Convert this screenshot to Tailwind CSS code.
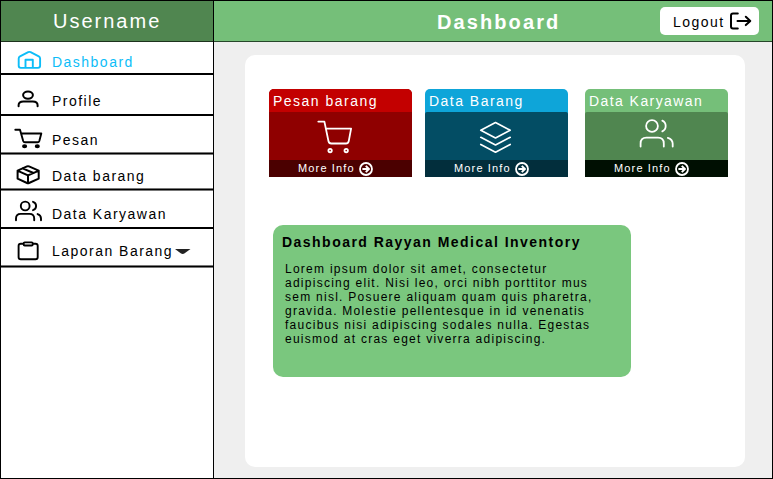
<!DOCTYPE html>
<html lang="id">
<head>
<meta charset="utf-8">
<title>Dashboard</title>
<script src="https://cdn.jsdelivr.net/npm/@tailwindcss/browser@4"></script>
</head>
<body class="w-[773px] h-[479px] overflow-hidden font-['Liberation_Sans',Arial,sans-serif] text-black">
<div class="flex w-[773px] h-[479px] border border-black bg-[#efefef]">
  <aside class="w-[213px] h-full shrink-0 bg-white border-r border-black">
    <div class="h-[41px] bg-[#508650] border-b border-[#1d321d] text-white text-[20px] leading-[24px] tracking-[0.1em] pt-[8px] pl-[52px]">Username</div>
    <nav class="text-[14px] leading-[16px] tracking-[1.48px] whitespace-nowrap">
      <a class="flex h-[33px] border-b-2 border-black text-[#0dbdf8]">
        <svg class="w-[51px] h-[31px] shrink-0" viewBox="1 42 51 31" fill="none" stroke="currentColor" stroke-width="1.9" stroke-linecap="round" stroke-linejoin="round"><path d="M18.7 58.6Q18.7 57 20 56.3L28.2 52.2Q29.4 51.6 30.6 52.2L38.8 56.3Q40.1 57 40.1 58.6V65.8Q40.1 67.9 38 67.9H20.8Q18.7 67.9 18.7 65.8ZM25.5 67.5V59.7H32.8V67.5"/></svg>
        <span class="pt-[12px]">Dashboard</span>
      </a>
      <a class="flex h-[41px] border-b-2 border-black">
        <svg class="w-[51px] h-[39px] shrink-0" viewBox="1 75 51 39" fill="none" stroke="currentColor" stroke-width="2" stroke-linecap="round"><ellipse cx="28" cy="95.1" rx="4.9" ry="3.6"/><path d="M18.6 106.3V105.3Q18.6 101.6 23.4 101.6H32.8Q37.6 101.6 37.6 105.3V106.3"/></svg>
        <span class="pt-[18px]">Profile</span>
      </a>
      <a class="flex h-[38px] border-b border-black shadow-[0_1px_0_#777,inset_0_-1px_0_#777]">
        <svg class="w-[51px] h-[36px] shrink-0" viewBox="1 116 51 36" fill="none" stroke="currentColor" stroke-width="1.9" stroke-linecap="round" stroke-linejoin="round"><path d="M15.3 129.7H20L23.2 141Q23.6 142.3 25 142.3H37.6Q38.9 142.3 39.3 141L41.3 133.5H21.3"/><ellipse cx="24.6" cy="146.2" rx="1.6" ry="1.1" fill="currentColor"/><ellipse cx="37.3" cy="146.2" rx="1.6" ry="1.1" fill="currentColor"/></svg>
        <span class="pt-[16px]">Pesan</span>
      </a>
      <a class="flex h-[36px] border-b border-black shadow-[0_1px_0_#777,inset_0_-1px_0_#777]">
        <svg class="w-[51px] h-[34px] shrink-0" viewBox="1 154 51 34" fill="none" stroke="currentColor" stroke-width="2" stroke-linecap="round" stroke-linejoin="round"><path d="M17.6 170.6L27 166.4Q28 166 29 166.4L38.7 170.6V178.7L29 183Q28 183.4 27 183L17.6 178.7ZM17.9 170.8L28 175.4L38.4 170.8M28 175.4V182.9M22.6 168.4L33.5 173"/></svg>
        <span class="pt-[14px]">Data barang</span>
      </a>
      <a class="flex h-[39px] border-b-2 border-black">
        <svg class="w-[51px] h-[37px] shrink-0" viewBox="1 190 51 37" fill="none" stroke="currentColor" stroke-width="1.9" stroke-linecap="round"><circle cx="25.2" cy="206" r="4.4"/><path d="M16 220.3V218.6Q16 213.9 20.7 213.9H29.5Q34.2 213.9 34.2 218.6V220.3M33 201.8A4.4 4.4 0 0 1 33 210.2M37.6 214.1Q41 215.2 41 218.6V220.3"/></svg>
        <span class="pt-[16px]">Data Karyawan</span>
      </a>
      <a class="flex h-[38px] border-b border-black shadow-[0_1px_0_#777,inset_0_-1px_0_#777]">
        <svg class="w-[51px] h-[36px] shrink-0" viewBox="1 229 51 36" fill="none" stroke="currentColor" stroke-width="1.9" stroke-linejoin="round"><path d="M23.7 243.8H20.8Q18.6 243.8 18.6 245.8V257.3Q18.6 259.3 20.8 259.3H35.5Q37.7 259.3 37.7 257.3V245.8Q37.7 243.8 35.5 243.8H32.6"/><rect x="23.7" y="242.4" width="9" height="3.1" rx="1"/></svg>
        <span class="pt-[14px]">Laporan Barang</span>
        <svg class="w-[16px] h-[6px] mt-[20px] ml-[2px]" viewBox="0 0 16 6"><path d="M0 0H15.5L9.7 4.2Q7.7 5.6 5.7 4.2Z" fill="#222"/></svg>
      </a>
    </nav>
  </aside>

  <div class="flex flex-col flex-1">
    <header class="flex h-[41px] shrink-0 bg-[#75bf79] border-b border-[#27472a]">
      <h1 class="w-[446px] pl-[223px] pt-[9px] text-white font-bold text-[20px] leading-[24px] tracking-[2.1px]">Dashboard</h1>
      <button class="flex w-[99px] h-[28px] mt-[6px] pl-[13px] bg-white rounded-[5px] text-[14px] leading-[16px] tracking-[1.48px]">
        <span class="pt-[7px]">Logout</span>
        <svg class="w-[24px] h-[20px] mt-[4px] ml-[4px] shrink-0" viewBox="729 11 24 20" fill="none" stroke="black" stroke-width="2" stroke-linecap="round" stroke-linejoin="round"><path d="M737.8 13.5H733Q731 13.5 731 15.5V26.5Q731 28.5 733 28.5H737.8M737.5 20.9H750.2M745.8 16.7L750.3 20.9L745.8 25.1"/></svg>
      </button>
    </header>
    <main class="ml-[31px] mt-[13px] w-[500px] h-[412px] bg-white rounded-[10px] pt-[34px] pl-[24px]">
      <div class="flex text-white">
        <section class="w-[143px] h-[88px] rounded-t-[5px] overflow-hidden bg-[#8f0000]">
          <h2 class="h-[23px] bg-[#c30000] pl-[4px] pt-[4px] text-[14px] leading-[16px] tracking-[1.48px] whitespace-nowrap">Pesan barang</h2>
          <svg class="block w-[143px] h-[48px]" viewBox="269 112 143 48" fill="none" stroke="white" stroke-width="1.8" stroke-linecap="round" stroke-linejoin="round"><path d="M318.3 121.6H324.4L328.5 141.3Q329 143.5 331.2 143.5H346Q348.2 143.5 348.7 141.3L351.1 128.7H326"/><circle cx="330.1" cy="150.6" r="1.7"/><circle cx="346.2" cy="150.6" r="1.7"/></svg>
          <div class="flex h-[17px] bg-[#4b0000] pl-[29px] text-[11px] leading-[13px] tracking-[1.15px]">
            <span class="pt-[2px]">More Info</span>
            <svg class="w-[14px] h-[14px] mt-[2px] ml-[4px]" viewBox="0 0 14 14" fill="none" stroke="white" stroke-width="1.8"><circle cx="7" cy="7" r="6"/><path d="M3.4 7H9.6M6.8 3.9L9.9 7L6.8 10.1" stroke-width="2"/></svg>
          </div>
        </section>
        <section class="w-[143px] h-[88px] ml-[13px] rounded-t-[5px] overflow-hidden bg-[#0ea5d9]">
          <h2 class="h-[23px] pl-[4px] pt-[4px] text-[14px] leading-[16px] tracking-[1.48px] whitespace-nowrap">Data Barang</h2>
          <svg class="block w-[143px] h-[48px] bg-[#034d64] rounded-t-[2px]" viewBox="425 112 143 48" fill="none" stroke="white" stroke-width="1.7" stroke-linecap="round" stroke-linejoin="round"><path d="M495.5 122.5L510.2 130.2L495.5 137.9L480.8 130.2ZM480.8 137.3L495.5 145L510.2 137.3M480.8 144.5L495.5 152.2L510.2 144.5"/></svg>
          <div class="flex h-[17px] bg-[#022e3c] pl-[29px] text-[11px] leading-[13px] tracking-[1.15px]">
            <span class="pt-[2px]">More Info</span>
            <svg class="w-[14px] h-[14px] mt-[2px] ml-[4px]" viewBox="0 0 14 14" fill="none" stroke="white" stroke-width="1.8"><circle cx="7" cy="7" r="6"/><path d="M3.4 7H9.6M6.8 3.9L9.9 7L6.8 10.1" stroke-width="2"/></svg>
          </div>
        </section>
        <section class="w-[143px] h-[88px] ml-[17px] rounded-t-[5px] overflow-hidden bg-[#75bf79]">
          <h2 class="h-[23px] pl-[4px] pt-[4px] text-[14px] leading-[16px] tracking-[1.43px] whitespace-nowrap">Data Karyawan</h2>
          <svg class="block w-[143px] h-[48px] bg-[#508650] rounded-t-[2px]" viewBox="585 112 143 48" fill="none" stroke="white" stroke-width="1.8" stroke-linecap="round"><circle cx="652" cy="126" r="5.9"/><path d="M640.6 146.6V143.5Q640.6 137.7 646.4 137.7H658Q663.8 137.7 663.8 143.5V146.6M662.3 120.6A6 6 0 0 1 662.3 131.4M667.8 137.8Q672.7 139.3 672.7 143.8V146.6"/></svg>
          <div class="flex h-[17px] bg-[#000f02] pl-[29px] text-[11px] leading-[13px] tracking-[1.15px]">
            <span class="pt-[2px]">More Info</span>
            <svg class="w-[14px] h-[14px] mt-[2px] ml-[4px]" viewBox="0 0 14 14" fill="none" stroke="white" stroke-width="1.8"><circle cx="7" cy="7" r="6"/><path d="M3.4 7H9.6M6.8 3.9L9.9 7L6.8 10.1" stroke-width="2"/></svg>
          </div>
        </section>
      </div>
      <section class="ml-[4px] mt-[48px] w-[358px] h-[152px] rounded-[10px] bg-[#7ac77e] pt-[9px] pl-[9px]">
        <h2 class="text-[14px] leading-[16px] font-bold tracking-[1.47px] whitespace-nowrap">Dashboard Rayyan Medical Inventory</h2>
        <p class="mt-[12px] ml-[3px] text-[12px] leading-[14px] tracking-[1.26px] whitespace-nowrap">Lorem ipsum dolor sit amet, consectetur<br>adipiscing elit. Nisi leo, orci nibh porttitor mus<br>sem nisl. Posuere aliquam quam quis pharetra,<br>gravida. Molestie pellentesque in id venenatis<br>faucibus nisi adipiscing sodales nulla. Egestas<br>euismod at cras eget viverra adipiscing.</p>
      </section>
    </main>
  </div>
</div>
</body>
</html>
